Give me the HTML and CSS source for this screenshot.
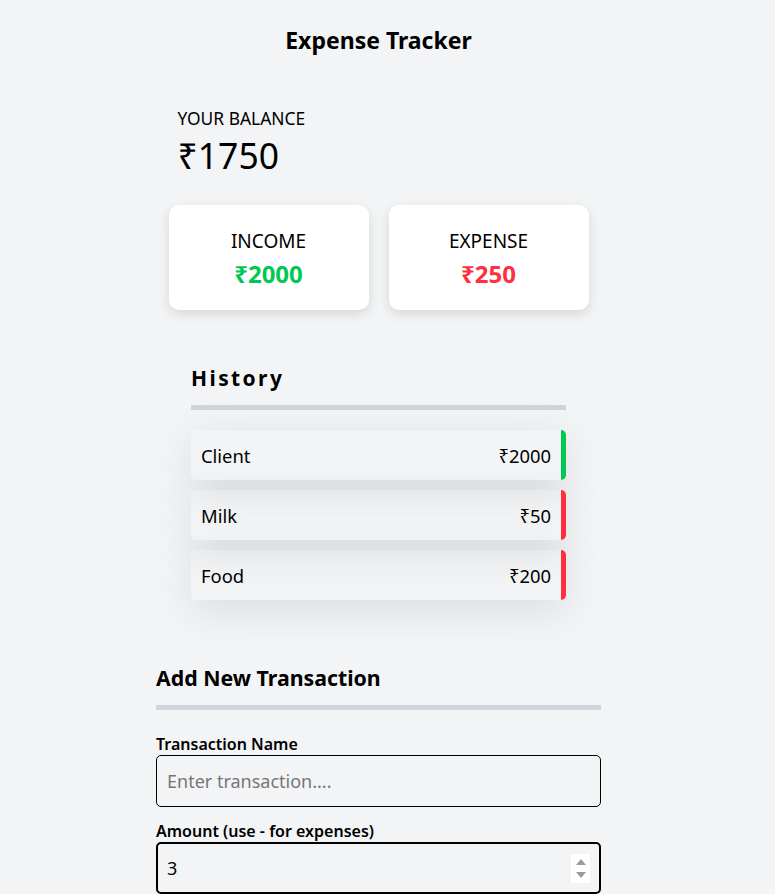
FILE: index.html
```html
<!DOCTYPE html>
<html lang="en">
<head>
<meta charset="utf-8">
<title>Expense Tracker</title>
<link rel="stylesheet" href="styles.css">
</head>
<body>
<div class="page">
  <h2 class="title">Expense Tracker</h2>
  <div class="summary">
    <div class="balance">
      <h4 class="balance-label">YOUR BALANCE</h4>
      <h1 class="balance-value">₹1750</h1>
    </div>
    <div class="cards">
      <div class="card">
        <h4 class="card-label">INCOME</h4>
        <p class="card-value plus">₹2000</p>
      </div>
      <div class="card">
        <h4 class="card-label">EXPENSE</h4>
        <p class="card-value minus">₹250</p>
      </div>
    </div>
  </div>
  <div class="history">
    <h3 class="history-title">History</h3>
    <div class="bar"></div>
    <ul class="list">
      <li class="item item-plus"><span>Client</span><span>₹2000</span></li>
      <li class="item item-minus"><span>Milk</span><span>₹50</span></li>
      <li class="item item-minus"><span>Food</span><span>₹200</span></li>
    </ul>
  </div>
  <form class="form">
    <h3 class="form-title">Add New Transaction</h3>
    <div class="bar"></div>
    <label class="label label-first" for="text">Transaction Name</label>
    <input class="input" id="text" type="text" placeholder="Enter transaction....">
    <label class="label" for="amount">Amount (use - for expenses)</label>
    <div class="input input-focus">
      <span>3</span>
      <span class="spin"><span class="up"></span><span class="down"></span></span>
    </div>
  </form>
</div>
</body>
</html>
```
FILE: styles.css
```css
* { box-sizing: border-box; }
html, body { margin: 0; padding: 0; }
body {
  background: #f3f4f6;
  font-family: "Noto Sans", "DejaVu Sans", sans-serif;
  color: #000;
  overflow: hidden;
}
.page { width: 757px; }
.title {
  margin: 0;
  padding-top: 26px;
  font-size: 23px;
  line-height: 28px;
  font-weight: 700;
  text-align: center;
}
.summary { width: 420px; margin: 52px auto 0; }
.balance { padding-left: 9px; }
.balance-label { margin: 0; font-size: 17.4px; line-height: 24px; font-weight: 400; }
.balance-value { margin: 5px 0 0; font-size: 35.5px; line-height: 40px; font-weight: 400; }
.cards { display: flex; gap: 20px; margin-top: 30px; }
.card {
  flex: 1;
  height: 105px;
  background: #fff;
  border-radius: 10px;
  box-shadow: 0 4px 12px rgba(0,0,0,0.12);
  text-align: center;
  padding-top: 23px;
}
.card-label { margin: 0; font-size: 19px; line-height: 26px; font-weight: 400; }
.card-value { margin: 5px 0 0; font-size: 24px; line-height: 30px; font-weight: 700; }
.plus { color: #00c853; }
.minus { color: #ff2f3f; }
.history { width: 375px; margin: 53px auto 0; }
.history-title { margin: 0; font-size: 21px; line-height: 30px; font-weight: 700; letter-spacing: 2.4px; }
.bar { height: 5px; background: #d1d5db; margin-top: 12px; }
.list { list-style: none; margin: 20px 0 0; padding: 0; display: flex; flex-direction: column; gap: 10px; }
.item {
  height: 50px;
  display: flex;
  justify-content: space-between;
  align-items: center;
  padding: 0 10px;
  font-size: 18.4px;
  border-right: 5px solid;
  border-radius: 5px;
  box-shadow: 0 10px 45px rgba(0,0,0,0.1);
}
.item-plus { border-right-color: #00c853; }
.item-minus { border-right-color: #ff2f3f; }
.form { width: 445px; margin: 63px auto 0; }
.form-title { margin: 0; font-size: 21.3px; line-height: 30px; font-weight: 700; }
.label { display: block; margin-top: 14px; font-size: 16px; line-height: 20px; font-weight: 600; }
.label-first { margin-top: 24px; }
.input {
  display: flex;
  align-items: center;
  justify-content: space-between;
  width: 100%;
  height: 52px;
  margin-top: 1px;
  border: 1px solid #000;
  border-radius: 5px;
  background: transparent;
  padding: 0 10px;
  font-family: inherit;
  font-size: 18px;
  color: #000;
  outline: none;
}
.input::placeholder { color: #767676; }
.input-focus { border-width: 2px; padding: 0 9px; }
.spin {
  display: flex;
  flex-direction: column;
  justify-content: space-between;
  align-items: center;
  width: 19px;
  height: 29px;
  background: #fff;
  padding: 5px 0;
}
.up, .down { width: 0; height: 0; border-left: 5px solid transparent; border-right: 5px solid transparent; }
.up { border-bottom: 6px solid #9a9a9a; }
.down { border-top: 6px solid #9a9a9a; }
```
